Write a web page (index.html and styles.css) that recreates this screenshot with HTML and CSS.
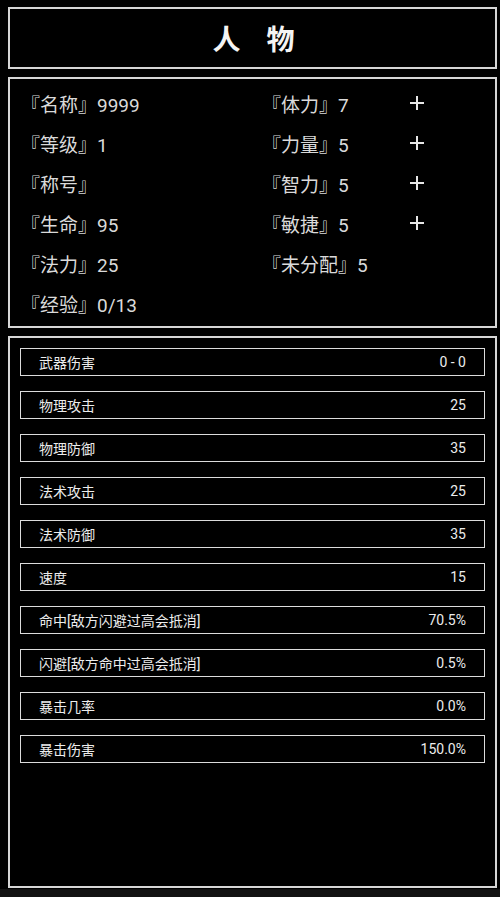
FILE: index.html
```html
<!DOCTYPE html>
<html lang="zh">
<head>
<meta charset="utf-8">
<title>人物</title>
<link rel="stylesheet" href="styles.css">
</head>
<body>
<div class="page">
  <header class="box title-box">
    <h1 class="title"><span>人</span><span>物</span></h1>
  </header>

  <section class="box stats">
    <div class="cell">『名称』9999</div>
    <div class="cell">『体力』7</div>
    <div class="plus"><svg viewBox="0 0 14 14" width="14" height="14"><path d="M7 0V14M0 7H14" stroke="#e6e6e6" stroke-width="2" fill="none"/></svg></div>

    <div class="cell">『等级』1</div>
    <div class="cell">『力量』5</div>
    <div class="plus"><svg viewBox="0 0 14 14" width="14" height="14"><path d="M7 0V14M0 7H14" stroke="#e6e6e6" stroke-width="2" fill="none"/></svg></div>

    <div class="cell">『称号』</div>
    <div class="cell">『智力』5</div>
    <div class="plus"><svg viewBox="0 0 14 14" width="14" height="14"><path d="M7 0V14M0 7H14" stroke="#e6e6e6" stroke-width="2" fill="none"/></svg></div>

    <div class="cell">『生命』95</div>
    <div class="cell">『敏捷』5</div>
    <div class="plus"><svg viewBox="0 0 14 14" width="14" height="14"><path d="M7 0V14M0 7H14" stroke="#e6e6e6" stroke-width="2" fill="none"/></svg></div>

    <div class="cell">『法力』25</div>
    <div class="cell">『未分配』5</div>
    <div class="plus"></div>

    <div class="cell">『经验』0/13</div>
    <div class="cell"></div>
    <div class="plus"></div>
  </section>

  <section class="box attrs">
    <div class="row"><span>武器伤害</span><span>0 - 0</span></div>
    <div class="row"><span>物理攻击</span><span>25</span></div>
    <div class="row"><span>物理防御</span><span>35</span></div>
    <div class="row"><span>法术攻击</span><span>25</span></div>
    <div class="row"><span>法术防御</span><span>35</span></div>
    <div class="row"><span>速度</span><span>15</span></div>
    <div class="row"><span>命中[敌方闪避过高会抵消]</span><span>70.5%</span></div>
    <div class="row"><span>闪避[敌方命中过高会抵消]</span><span>0.5%</span></div>
    <div class="row"><span>暴击几率</span><span>0.0%</span></div>
    <div class="row"><span>暴击伤害</span><span>150.0%</span></div>
  </section>
</div>
</body>
</html>
```

FILE: styles.css
```css
html {
  background: #121212;
}
body {
  margin: 0;
  background: #121212;
  font-family: Roboto, "Noto Sans CJK SC", sans-serif;
  color: #e8e8e8;
}
.page {
  background: #000;
  height: 889px;
  box-sizing: border-box;
  padding: 7px 3px 0 8px;
  display: flex;
  flex-direction: column;
  gap: 8px;
}
.box {
  border: 2px solid #d6d6d6;
  box-sizing: border-box;
}
.title-box {
  height: 62px;
  display: flex;
  align-items: center;
  justify-content: center;
}
.title {
  margin: 0;
  font-family: "Noto Sans CJK SC", sans-serif;
  font-size: 28px;
  font-weight: 700;
  color: #f4f4f4;
  display: flex;
  gap: 26px;
  padding-left: 2px;
}
.stats {
  height: 251px;
  padding: 4px 0 0 11px;
  display: grid;
  grid-template-columns: 241px 148px 14px;
  grid-auto-rows: 40px;
  align-items: center;
}
.cell {
  font-size: 19px;
  white-space: nowrap;
  color: #dadada;
}
.plus {
  display: flex;
  align-items: center;
  height: 14px;
}
.attrs {
  flex: 1;
  margin-bottom: 1px;
  padding: 10px 10px 0;
  display: flex;
  flex-direction: column;
  gap: 15px;
}
.row {
  height: 28px;
  box-sizing: border-box;
  border: 1px solid #dcdcdc;
  padding: 0 18px;
  display: flex;
  justify-content: space-between;
  align-items: center;
  font-size: 14px;
  color: #ececec;
}
```
